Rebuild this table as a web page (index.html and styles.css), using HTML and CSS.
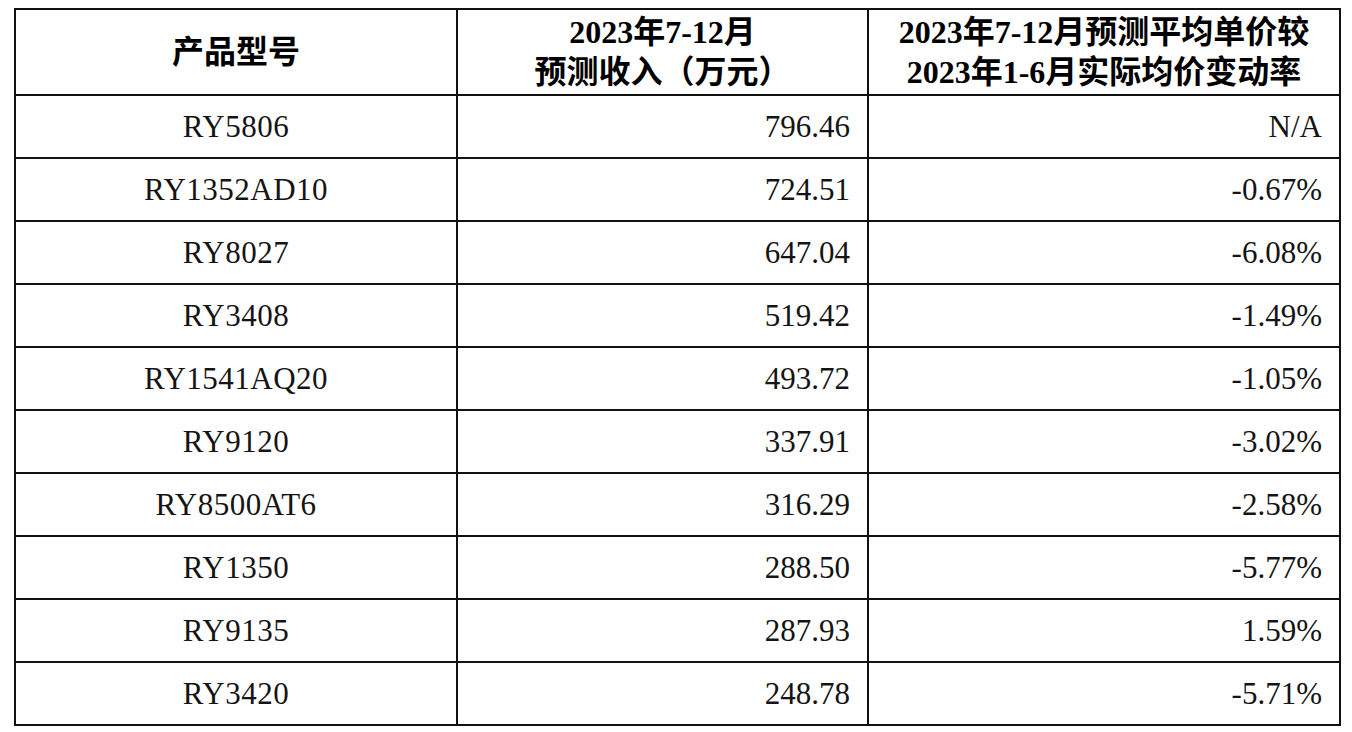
FILE: index.html
```html
<!DOCTYPE html>
<html lang="zh-CN">
<head>
<meta charset="utf-8">
<title>预测收入</title>
<link rel="stylesheet" href="styles.css">
</head>
<body>
<table class="data">
  <colgroup>
    <col class="c1">
    <col class="c2">
    <col class="c3">
  </colgroup>
  <thead>
    <tr>
      <th>产品型号</th>
      <th>2023年7-12月<br>预测收入（万元）</th>
      <th>2023年7-12月预测平均单价较<br>2023年1-6月实际均价变动率</th>
    </tr>
  </thead>
  <tbody>
    <tr><td class="name">RY5806</td><td class="num">796.46</td><td class="num">N/A</td></tr>
    <tr><td class="name">RY1352AD10</td><td class="num">724.51</td><td class="num">-0.67%</td></tr>
    <tr><td class="name">RY8027</td><td class="num">647.04</td><td class="num">-6.08%</td></tr>
    <tr><td class="name">RY3408</td><td class="num">519.42</td><td class="num">-1.49%</td></tr>
    <tr><td class="name">RY1541AQ20</td><td class="num">493.72</td><td class="num">-1.05%</td></tr>
    <tr><td class="name">RY9120</td><td class="num">337.91</td><td class="num">-3.02%</td></tr>
    <tr><td class="name">RY8500AT6</td><td class="num">316.29</td><td class="num">-2.58%</td></tr>
    <tr><td class="name">RY1350</td><td class="num">288.50</td><td class="num">-5.77%</td></tr>
    <tr><td class="name">RY9135</td><td class="num">287.93</td><td class="num">1.59%</td></tr>
    <tr><td class="name">RY3420</td><td class="num">248.78</td><td class="num">-5.71%</td></tr>
  </tbody>
</table>
</body>
</html>
```
FILE: styles.css
```css
html, body {
  margin: 0;
  background: #ffffff;
}
body {
  padding: 8px 14px 0 14px;
}
.data {
  border-collapse: collapse;
  table-layout: fixed;
  width: 1325px;
  font-family: "Liberation Serif", "Noto Sans CJK SC", serif;
  color: #141414;
}
.c1 { width: 442px; }
.c2 { width: 411px; }
.c3 { width: 472px; }
.data th,
.data td {
  border: 2px solid #111111;
  padding: 0 18px;
}
.data th {
  height: 84px;
  font-size: 32px;
  line-height: 40px;
  font-weight: bold;
  color: #000000;
  text-align: center;
  white-space: nowrap;
}
.data td {
  height: 61px;
  font-size: 31px;
  line-height: 36px;
}
.data td.name {
  text-align: center;
  letter-spacing: 0.5px;
}
.data td.num {
  text-align: right;
  padding-right: 17px;
}
```
